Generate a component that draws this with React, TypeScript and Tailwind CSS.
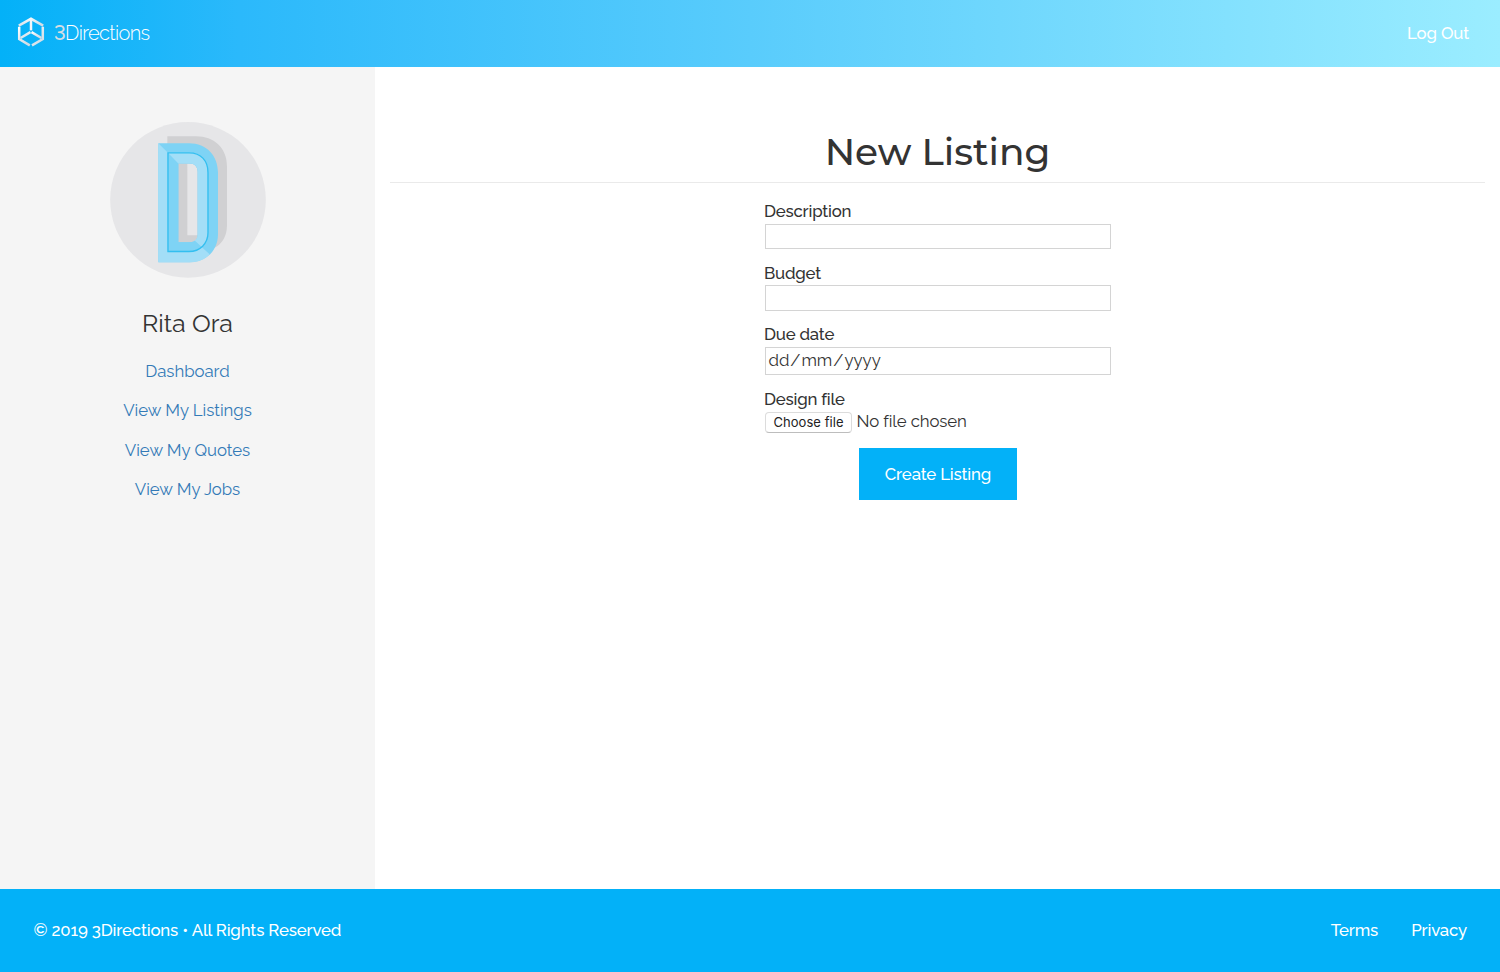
import React from "react";

function Logo() {
  return (
    <svg className="-mt-[2px] h-[30px] w-[28px]" viewBox="0 0 28 30" fill="none" strokeWidth="2.5">
      <defs>
        <linearGradient id="steel" x1="0" y1="0" x2="0.6" y2="1">
          <stop offset="0" stopColor="#ffffff" />
          <stop offset="0.5" stopColor="#e3eaf0" />
          <stop offset="1" stopColor="#d3dde6" />
        </linearGradient>
      </defs>
      <g stroke="url(#steel)">
        <path d="M1.8 8.6 14 1.8 26.2 8.6" />
        <path d="M2.2 9.8V22.1L12.8 28.4" />
        <path d="M25.8 9.8V22.1L15 28.4" />
        <path d="M3.6 21 13.5 15.2" />
        <path d="M14.5 15.2 24.4 21" />
      </g>
      <path d="M14 2.6V13.4" stroke="#f1f5f9" />
    </svg>
  );
}

function Avatar() {
  return (
    <svg className="block size-[156px]" viewBox="29 35.5 468 468">
      <circle cx="263" cy="269" r="233.5" fill="#e6e6e8" />
      <path
        fillRule="evenodd"
        fill="#d0d0d2"
        d="M201 78H288C340 78 380 112 380 168V345C380 382 362 402 344 412L290 425H201ZM261 160V375H292V185C292 170 283 160 268 160Z"
      />
      <path
        fillRule="evenodd"
        fill="#7ed3f5"
        d="M174 99H266C320 99 353 137 353 188V372C353 423 315 456 268 456H174ZM234 160V396H268C285 396 292 387 292 372V185C292 170 283 160 268 160Z"
      />
      <path fill="#a3def7" d="M174 99 202 127V425H260C282 425 294 418 303 410L328 432C313 448 293 456 268 456H174Z" />
      <path fill="#7ed3f5" d="M202 127 234 160V396H268C276 396 281 394 284 391L304 411C294 420 281 425 266 425H202Z" />
      <path
        fill="#a3def7"
        d="M202 127H268C302 127 322 153 322 187V370C322 388 315 401 305 411L283 391C289 387 292 381 292 372V185C292 170 283 160 268 160H234Z"
      />
      <path fill="none" stroke="#33bff0" strokeWidth="4" d="M203 128H266C303 128 323 153 323 187V368C323 400 299 424 266 424H203Z" />
    </svg>
  );
}

const links = ["Dashboard", "View My Listings", "View My Quotes", "View My Jobs"];

export default function App() {
  return (
    <div className="flex h-[972px] w-[1500px] flex-col bg-white font-['Raleway','Lato',sans-serif] text-[16.8px] leading-6 tracking-[-0.02px] text-[#333]">
      <header className="flex h-[67px] shrink-0 items-center justify-between bg-[linear-gradient(90deg,#03b1f8,#2bb9fb_16%,#59ccfc_50%,#9bedff)] pr-[31px] pb-[1.5px] pl-[17px] text-white">
        <a className="flex items-center gap-[9px]">
          <Logo />
          <span className="text-[20px] font-light tracking-[-0.65px] lining-nums">
            <span className="font-medium text-[#d5dde4]">3</span>Directions
          </span>
        </a>
        <a className="font-medium tracking-[-0.15px]">Log Out</a>
      </header>

      <main className="flex min-h-0 flex-1">
        <aside className="flex w-[375px] shrink-0 flex-col items-center bg-[#f5f5f5] pt-[54.5px]">
          <Avatar />
          <h2 className="mt-[27.5px] text-[25px] leading-9">Rita Ora</h2>
          <nav className="mt-[17.5px] flex flex-col items-center gap-[15.6px] text-[#337ab7]">
            {links.map((label) => (
              <a key={label}>{label}</a>
            ))}
          </nav>
        </aside>

        <section className="flex flex-1 flex-col items-center px-[15px]">
          <h1 className="w-full border-b border-[#eaeaea] pt-[61px] pb-[6px] text-center font-['Montserrat','Lato',sans-serif] text-[37.5px] leading-[48px] font-medium tracking-normal">
            New Listing
          </h1>
          <form className="ml-px flex w-[346px] flex-col pt-[17px]">
            <label className="-mt-px mb-px -ml-px font-medium tracking-[-0.2px]">Description</label>
            <div className="h-[25px] border border-[#d4d4d4]" />
            <label className="mt-[12px] -ml-px font-medium tracking-[-0.2px]">Budget</label>
            <div className="h-[26px] border border-[#d4d4d4]" />
            <label className="mt-[11px] -ml-px font-medium tracking-[-0.2px]">Due date</label>
            <div className="mt-px flex h-[28px] items-center border border-[#d4d4d4] pb-[2px] pl-[2.5px]">
              <span>dd</span>
              <span className="px-[1px]">/</span>
              <span>mm</span>
              <span className="px-[1px]">/</span>
              <span>yyyy</span>
            </div>
            <label className="mt-[12px] -ml-px font-medium tracking-[-0.2px]">Design file</label>
            <div className="flex h-[22px] items-center gap-[4.5px]">
              <span className="flex h-[21px] w-[87px] items-center justify-center rounded-[4px] border border-[#dcdcdc] border-b-[#bdbdbd] bg-white font-['Inter',sans-serif] text-[13px] leading-4 tracking-[0.05px] text-[#222]">
                Choose file
              </span>
              <span className="-mt-[2px] tracking-[-0.1px]">No file chosen</span>
            </div>
            <div className="mt-[15px] flex h-[52px] w-[158px] items-center justify-center self-center bg-[#03b1f8] font-medium tracking-[-0.15px] text-white">
              Create Listing
            </div>
          </form>
        </section>
      </main>

      <footer className="flex h-[83px] shrink-0 items-center justify-between bg-[#03b1f8] pr-[33px] pb-[2px] pl-[33.5px] font-medium tracking-[-0.14px] text-white">
        <span>© 2019 3Directions • All Rights Reserved</span>
        <div className="flex gap-[33px]">
          <a>Terms</a>
          <a>Privacy</a>
        </div>
      </footer>
    </div>
  );
}
